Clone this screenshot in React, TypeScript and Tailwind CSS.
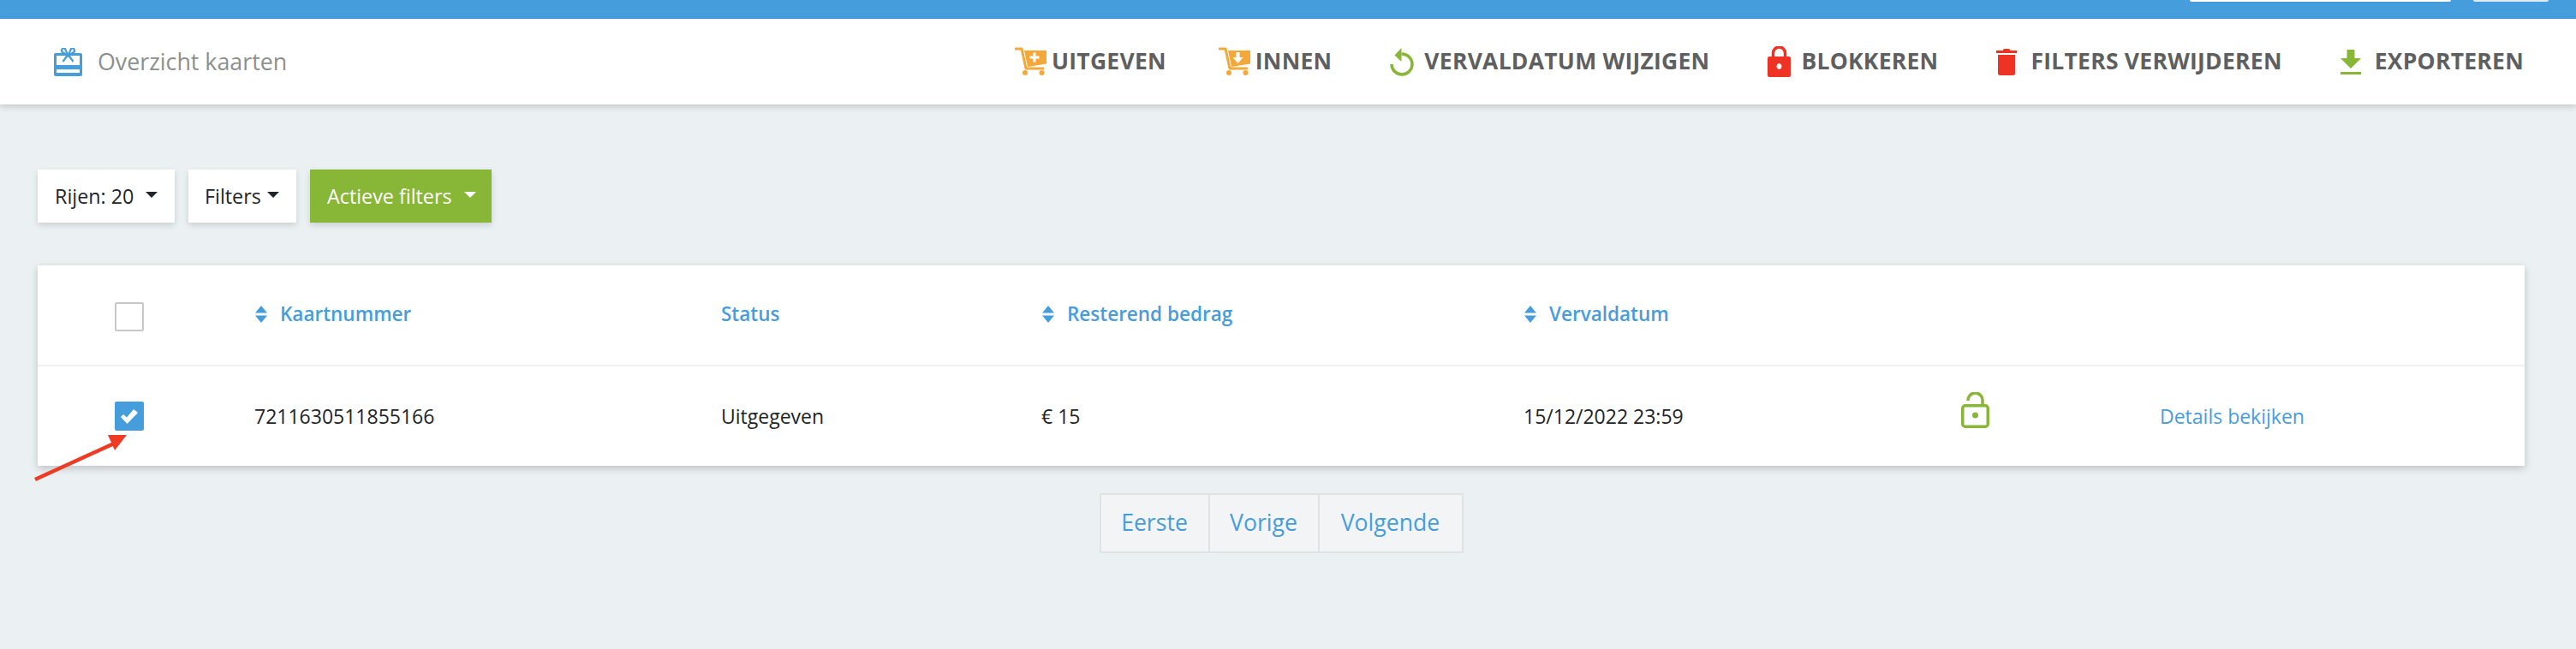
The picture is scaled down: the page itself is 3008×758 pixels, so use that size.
import type { ReactNode } from 'react';

function CartIcon({ children }: { children: ReactNode }) {
  return (
    <svg width="38" height="34" viewBox="0 0 38 34" className="shrink-0">
      <path d="M1 2h7l5 23h20" fill="none" stroke="#f5a83a" strokeWidth="3" strokeLinecap="round" strokeLinejoin="round" />
      <path d="M11 4h26v15.5L15 23z" fill="#f5a83a" />
      <circle cx="12" cy="30" r="3" fill="#f5a83a" />
      <circle cx="31.5" cy="30" r="3" fill="#f5a83a" />
      {children}
    </svg>
  );
}

function NavItem({ icon, label, className }: { icon: ReactNode; label: string; className: string }) {
  return (
    <div className={`flex items-center ${className}`}>
      {icon}
      <span className="text-[26.5px] font-bold tracking-[0.25px] text-[#5e5f61]">{label}</span>
    </div>
  );
}

function SortIcon() {
  return (
    <svg width="16" height="22" viewBox="0 0 16 22" className="shrink-0">
      <path d="M8 1l7 8.500H1z" fill="#469ddc" />
      <path d="M8 21l7-8.500H1z" fill="#469ddc" />
    </svg>
  );
}

function Caret({ className }: { className: string }) {
  return <span className={`h-0 w-0 border-x-[7px] border-t-[7px] border-x-transparent ${className}`} />;
}

function HeaderCell({ label, sortable }: { label: string; sortable?: boolean }) {
  return (
    <div className="mt-[-3px] flex items-center gap-[14px] text-[22.5px] font-semibold text-[#469ddc]">
      {sortable && <SortIcon />}
      <span>{label}</span>
    </div>
  );
}

const rowClass = 'grid grid-cols-[253px_545px_374px_563px_511px_232px_1fr] items-center';

export default function App() {
  return (
    <div className="flex min-h-screen flex-col bg-[#ebf0f3] font-['Open_Sans',sans-serif]">
      {/* Top bar */}
      <div className="flex h-[22px] items-start justify-end gap-[26px] bg-[#469ddc] pr-[32px]">
        <div className="h-[2px] w-[305px] rounded-b-lg bg-white" />
        <div className="h-[2px] w-[88px] rounded-b-lg bg-[#dcebf7]" />
      </div>

      {/* Toolbar */}
      <div className="flex h-[100px] items-center justify-between bg-white pr-[61px] pl-[63px] shadow-[0_3px_7px_rgba(0,0,0,0.16)]">
        <div className="flex items-center gap-[18px]">
          <svg width="33" height="33" viewBox="0 0 33 33" className="shrink-0">
            <path d="M2 6h29a2 2 0 0 1 2 2v23a2 2 0 0 1-2 2H2a2 2 0 0 1-2-2V8a2 2 0 0 1 2-2z" fill="#469ddc" />
            <rect x="3" y="9" width="27" height="11" fill="#fff" />
            <rect x="3" y="25" width="27" height="4" fill="#fff" />
            <path d="M16.500 9L10 5a2.500 2.500 0 0 1 3-4zM16.500 9L23 5a2.500 2.500 0 0 0-3-4z" fill="#fff" stroke="#469ddc" strokeWidth="2.200" />
            <path d="M15.500 9l-5 7M17.500 9l5 7" stroke="#469ddc" strokeWidth="2.200" />
          </svg>
          <span className="text-[26.8px] text-[#8c9090]">Overzicht kaarten</span>
        </div>
        <div className="flex items-center gap-[68px]">
          <NavItem
            className="gap-[5px]"
            label="UITGEVEN"
            icon={
              <CartIcon>
                <path d="M21.500 6.500h3v4h4v3h-4v4h-3v-4h-4v-3h4z" fill="#fff" />
              </CartIcon>
            }
          />
          <NavItem
            className="ml-[-7px] gap-[5px]"
            label="INNEN"
            icon={
              <CartIcon>
                <path d="M20.500 6h4v6h4l-6 7-6-7h4z" fill="#fff" />
              </CartIcon>
            }
          />
          <NavItem
            className="gap-[12px]"
            label="VERVALDATUM WIJZIGEN"
            icon={
              <svg width="28" height="33" viewBox="0 0 28 33" className="shrink-0">
                <path d="M13.500 7A12 12 0 1 1 2 19" fill="none" stroke="#88b637" strokeWidth="3.500" />
                <path d="M13.500 0v16L5.500 8.500z" fill="#88b637" />
              </svg>
            }
          />
          <NavItem
            className="gap-[12px]"
            label="BLOKKEREN"
            icon={
              <svg width="27" height="36" viewBox="0 0 27 36" className="shrink-0">
                <path d="M6.500 14V8a7 7 0 0 1 14 0v6" fill="none" stroke="#ee3224" strokeWidth="3.500" />
                <path fillRule="evenodd" d="M2 12h23a2 2 0 0 1 2 2v20a2 2 0 0 1-2 2H2a2 2 0 0 1-2-2V14a2 2 0 0 1 2-2zm11.500 8a3 3.500 0 1 0 .001 0z" fill="#ee3224" />
              </svg>
            }
          />
          <NavItem
            className="gap-[16px]"
            label="FILTERS VERWIJDEREN"
            icon={
              <svg width="24" height="31" viewBox="0 0 24 31" className="shrink-0">
                <path d="M8 1.500a1.500 1.500 0 0 1 1.500-1.500h5A1.500 1.500 0 0 1 16 1.500V2h8v3H0V2h8z" fill="#ee3224" />
                <path d="M2 7h20v21.500a2.500 2.500 0 0 1-2.500 2.500h-15A2.500 2.500 0 0 1 2 28.500z" fill="#ee3224" />
              </svg>
            }
          />
          <NavItem
            className="gap-[16px]"
            label="EXPORTEREN"
            icon={
              <svg width="24" height="29" viewBox="0 0 24 29" className="shrink-0">
                <path d="M7.500 0h9v10H24L12 22 0 10h7.500z" fill="#88b637" />
                <rect y="26" width="24" height="3" fill="#88b637" />
              </svg>
            }
          />
        </div>
      </div>

      <div className="relative flex flex-col pt-[76px] pl-[44px]">
        {/* Filter buttons */}
        <div className="flex gap-[16px]">
          <button className="flex h-[62px] w-[160px] items-center bg-white pl-[20px] text-[23.3px] text-[#212529] shadow-[0_3px_7px_rgba(0,0,0,0.14)]">
            <span>Rijen: 20</span>
            <Caret className="mt-[-4px] ml-[14px] border-t-[#212529]" />
          </button>
          <button className="flex h-[62px] w-[126px] items-center bg-white pl-[19px] text-[23.3px] text-[#212529] shadow-[0_3px_7px_rgba(0,0,0,0.14)]">
            <span>Filters</span>
            <Caret className="mt-[-4px] ml-[7px] border-t-[#212529]" />
          </button>
          <button className="flex h-[62px] w-[212px] items-center bg-[#88b637] pl-[20px] text-[23.3px] text-white shadow-[0_3px_7px_rgba(0,0,0,0.14)]">
            <span>Actieve filters</span>
            <Caret className="mt-[-4px] ml-[14px] border-t-white" />
          </button>
        </div>

        {/* Table */}
        <div className="mt-[50px] flex w-[2904px] flex-col bg-white shadow-[0_3px_9px_rgba(0,0,0,0.2)]">
          <div className={`${rowClass} h-[118px] border-b-2 border-[#f0f1f2]`}>
            <div className="flex justify-center pr-[39px]">
              <span className="mt-[4px] h-[34px] w-[34px] rounded-[2px] border-2 border-[#c8c8c8] bg-white" />
            </div>
            <HeaderCell label="Kaartnummer" sortable />
            <HeaderCell label="Status" />
            <HeaderCell label="Resterend bedrag" sortable />
            <HeaderCell label="Vervaldatum" sortable />
            <div />
            <div />
          </div>
          <div className={`${rowClass} h-[116px] text-[23px] text-[#212529]`}>
            <div className="flex justify-center pr-[39px]">
              <span className="flex h-[34px] w-[34px] items-center justify-center rounded-[2px] bg-[#469ddc]">
                <svg width="20" height="17" viewBox="0 0 20 17">
                  <path d="M0 9l3-3 4 3.500L15 0l5 4L7.500 17z" fill="#fff" />
                </svg>
              </span>
            </div>
            <div>7211630511855166</div>
            <div>Uitgegeven</div>
            <div>€ 15</div>
            <div>15/12/2022 23:59</div>
            <div className="mb-[14px]">
              <svg width="33" height="42" viewBox="0 0 33 42">
                <path d="M8 10A8.500 8.500 0 0 1 25 9v6" fill="none" stroke="#88b637" strokeWidth="3.500" />
                <rect x="1.750" y="15.750" width="29.500" height="24.500" rx="3" fill="none" stroke="#88b637" strokeWidth="3.500" />
                <circle cx="16.500" cy="27" r="3.500" fill="#88b637" />
              </svg>
            </div>
            <div className="whitespace-nowrap text-[23px] text-[#469ddc]">Details bekijken</div>
          </div>
        </div>

        {/* Pagination */}
        <div className="mt-[32px] flex w-[2904px] justify-center">
          <div className="flex h-[70px] items-stretch border-2 border-[#e0e3e6] bg-[#f3f4f5] text-[26.6px] text-[#469ddc]">
            <span className="flex w-[127px] items-center justify-center border-r-2 border-[#e0e3e6]">Eerste</span>
            <span className="flex w-[128px] items-center justify-center border-r-2 border-[#e0e3e6]">Vorige</span>
            <span className="flex w-[166px] items-center justify-center">Volgende</span>
          </div>
        </div>

        {/* Red annotation arrow */}
        <svg width="130" height="70" viewBox="0 0 130 70" className="absolute top-[386px] left-[30px]">
          <path d="M11 52L103 10" stroke="#ee3b24" strokeWidth="4.500" />
          <path d="M96 0h22l-14 18z" fill="#ee3b24" />
        </svg>
      </div>
    </div>
  );
}
